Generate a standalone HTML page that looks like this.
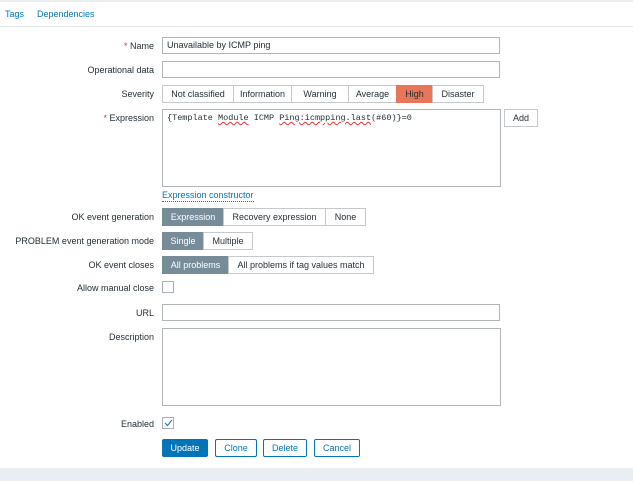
<!DOCTYPE html>
<html><head><style>
*{box-sizing:border-box;margin:0;padding:0}
body{width:633px;height:481px;background:#fff;font-family:"Liberation Sans",sans-serif;font-size:9px;color:#1f2c33;position:relative;overflow:hidden}
.a{position:absolute}
.lbl{position:absolute;right:479px;text-align:right;white-space:nowrap;line-height:12px}
.in{position:absolute;border:1px solid #b0b5b9;background:#fff;padding:0 4px;line-height:15px;white-space:nowrap}
.seg{position:absolute;display:flex;height:18px}
.seg span{border:1px solid #c5c9cc;margin-left:-1px;line-height:16px;background:#fff;white-space:nowrap;text-align:center}
.seg span:first-child{margin-left:0}
.seg .on{background:#768d99;border-color:#768d99;color:#fff}
.btn{position:absolute;height:18px;border:1px solid #0275b8;color:#0275b8;background:#fff;text-align:center;line-height:16px;border-radius:2px}
.req{color:#e33734}
.cb{position:absolute;width:12px;height:12px;border:1px solid #aab1b6;background:#fff}
</style></head><body>
<div class="a" style="left:0;top:0;width:633px;height:2px;background:#ebeef0"></div>
<div class="a" style="left:5px;top:9px;color:#0275b8">Tags</div>
<div class="a" style="left:37px;top:9px;color:#0275b8">Dependencies</div>
<div class="a" style="left:0;top:26px;width:633px;height:1px;background:#e6e9ec"></div>

<div class="lbl" style="top:40px"><span class="req">*</span> Name</div>
<div class="in" style="left:162px;top:37px;width:338px;height:17px">Unavailable by ICMP ping</div>
<div class="lbl" style="top:64px">Operational data</div>
<div class="in" style="left:162px;top:61px;width:338px;height:17px"></div>
<div class="lbl" style="top:88px">Severity</div>
<div class="seg" style="left:162px;top:85px"><span style="width:72px">Not classified</span><span style="width:59px">Information</span><span style="width:58px">Warning</span><span style="width:49px">Average</span><span style="width:37px;background:#e97659;border-color:#e97659">High</span><span style="width:52px">Disaster</span></div>
<div class="lbl" style="top:112px"><span class="req">*</span> Expression</div>
<div class="in" style="left:162px;top:109px;width:339px;height:78px;font-family:'Liberation Mono',monospace;font-size:8.5px;line-height:16px">{Template <u style="text-decoration-color:#e33;text-decoration-style:wavy">Module</u> ICMP <u style="text-decoration-color:#e33;text-decoration-style:wavy">Ping:icmpping.last</u>(#60)}=0</div>
<div class="a" style="left:504px;top:109px;width:34px;height:18px;border:1px solid #c5c9cc;text-align:center;line-height:16px">Add</div>
<div class="a" style="left:162px;top:190px;color:#0275b8;border-bottom:1px dotted #0275b8;line-height:11px">Expression constructor</div>

<div class="lbl" style="top:211px">OK event generation</div>
<div class="seg" style="left:162px;top:208px"><span class="on" style="width:62px">Expression</span><span style="width:103px">Recovery expression</span><span style="width:41px">None</span></div>
<div class="lbl" style="top:235px">PROBLEM event generation mode</div>
<div class="seg" style="left:162px;top:232px"><span class="on" style="width:42px">Single</span><span style="width:50px">Multiple</span></div>
<div class="lbl" style="top:259px">OK event closes</div>
<div class="seg" style="left:162px;top:256px"><span class="on" style="width:67px">All problems</span><span style="width:146px">All problems if tag values match</span></div>
<div class="lbl" style="top:282px">Allow manual close</div>
<div class="cb" style="left:162px;top:281px"></div>
<div class="lbl" style="top:307px">URL</div>
<div class="in" style="left:162px;top:304px;width:338px;height:17px"></div>
<div class="lbl" style="top:331px">Description</div>
<div class="in" style="left:162px;top:328px;width:339px;height:78px"></div>
<div class="lbl" style="top:418px">Enabled</div>
<div class="cb" style="left:162px;top:417px"><svg width="10" height="10" style="position:absolute;left:0;top:0"><path d="M2 5 L4.5 7.5 L9 2" stroke="#0275b8" stroke-width="1" fill="none"/></svg></div>

<div class="btn" style="left:162px;top:439px;width:46px;background:#0275b8;color:#fff">Update</div>
<div class="btn" style="left:215px;top:439px;width:42px">Clone</div>
<div class="btn" style="left:263px;top:439px;width:44px">Delete</div>
<div class="btn" style="left:314px;top:439px;width:46px">Cancel</div>
<div class="a" style="left:0;top:468px;width:633px;height:13px;background:#ebeef0"></div>
</body></html>
